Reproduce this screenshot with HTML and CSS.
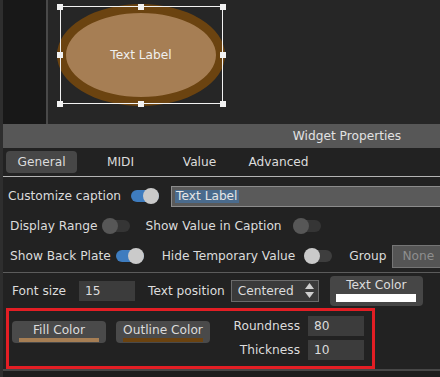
FILE: index.html
```html
<!DOCTYPE html>
<html lang="en">
<head>
    <meta charset="UTF-8">
    <title>Widget Properties</title>
    <link rel="stylesheet" href="styles.css">
</head>
<body>
    <div class="app">
        <div class="editor">
            <div class="sidebar"></div>
            <div class="stage">
                <div class="shape"><span>Text Label</span></div>
                <div class="selection">
                    <i class="handle h-tl"></i>
                    <i class="handle h-tc"></i>
                    <i class="handle h-tr"></i>
                    <i class="handle h-ml"></i>
                    <i class="handle h-mr"></i>
                    <i class="handle h-bl"></i>
                    <i class="handle h-bc"></i>
                    <i class="handle h-br"></i>
                </div>
            </div>
        </div>

        <div class="panel">
            <div class="panel-title">Widget Properties</div>
            <div class="tabs">
                <div class="tab active">General</div>
                <div class="tab">MIDI</div>
                <div class="tab">Value</div>
                <div class="tab">Advanced</div>
            </div>

            <div class="props">
                <div class="row row-caption">
                    <span>Customize caption</span>
                    <span class="toggle on t-caption"></span>
                    <div class="caption-input"><span class="selected">Text Label</span></div>
                </div>
                <div class="row">
                    <span>Display Range</span>
                    <span class="toggle t-range"></span>
                    <span class="lbl-showvalue">Show Value in Caption</span>
                    <span class="toggle t-showvalue"></span>
                </div>
                <div class="row">
                    <span>Show Back Plate</span>
                    <span class="toggle on t-plate"></span>
                    <span class="lbl-hide">Hide Temporary Value</span>
                    <span class="toggle light t-hide"></span>
                    <span class="lbl-group">Group</span>
                    <div class="group-select">None</div>
                </div>
            </div>

            <div class="row row-font">
                <span>Font size</span>
                <div class="num num-font">15</div>
                <span class="lbl-pos">Text position</span>
                <div class="select">
                    <span>Centered</span>
                    <svg class="arrows" width="9" height="15" viewBox="0 0 9 15">
                        <polygon points="4.5,0 9,6 0,6" fill="#cfcfcf"/>
                        <polygon points="0,9 9,9 4.5,15" fill="#cfcfcf"/>
                    </svg>
                </div>
                <div class="text-color-btn">
                    <div class="btn-label">Text Color</div>
                    <div class="swatch-white"></div>
                </div>
            </div>

            <div class="shape-box">
                <div class="color-btn">
                    <div class="btn-label">Fill Color</div>
                    <div class="bar fill"></div>
                </div>
                <div class="color-btn">
                    <div class="btn-label">Outline Color</div>
                    <div class="bar outline"></div>
                </div>
                <div class="metrics">
                    <label>Roundness</label>
                    <div class="num">80</div>
                    <label>Thickness</label>
                    <div class="num">10</div>
                </div>
            </div>
        </div>
    </div>
</body>
</html>
```

FILE: styles.css
```css
html, body {
    overflow: hidden;
}
body {
    margin: 0;
    background-color: #1d1d1d;
    font-family: "DejaVu Sans", "Liberation Sans", sans-serif;
    font-size: 12.2px;
    color: #dcdcdc;
}
.app {
    border-left: 3px solid #2e2e2e;
    height: 377px;
}

/* editor canvas */
.editor {
    display: flex;
    height: 124px;
}
.sidebar {
    width: 43px;
    background-color: #181818;
    border-right: 2px solid #494949;
}
.stage {
    flex: 1;
    position: relative;
    background-color: #262626;
}
.shape {
    position: absolute;
    left: 9px;
    top: 4px;
    width: 168px;
    height: 102px;
    box-sizing: border-box;
    border: 9px solid #6b4310;
    border-radius: 50%;
    background-color: #a67e54;
    display: flex;
    align-items: center;
    justify-content: center;
    color: #f0f0f0;
}
.selection {
    position: absolute;
    left: 12px;
    top: 6px;
    width: 163px;
    height: 98px;
    box-sizing: border-box;
    border: 1px solid #f2f2f2;
}
.handle {
    position: absolute;
    width: 6px;
    height: 6px;
    background-color: #f2f2f2;
}
.h-tl { left: -4px; top: -3px; }
.h-tc { left: 77px; top: -3px; }
.h-tr { right: -4px; top: -3px; }
.h-ml { left: -4px; top: 45px; }
.h-mr { right: -4px; top: 45px; }
.h-bl { left: -4px; bottom: -4px; }
.h-bc { left: 77px; bottom: -4px; }
.h-br { right: -4px; bottom: -4px; }

/* properties panel */
.panel {
    width: 688px;
    background-color: #222;
    border-bottom: 2px solid #474747;
}
.panel-title {
    height: 24px;
    line-height: 24px;
    background-color: #575757;
    text-align: center;
    color: #e2e2e2;
}
.tabs {
    display: flex;
    padding: 3px 0 3px 3px;
    border-bottom: 1px solid #b4b4b4;
}
.tab {
    width: 71px;
    height: 22px;
    line-height: 22px;
    text-align: center;
    margin-right: 8px;
    border-radius: 4px;
}
.tab.active {
    background-color: #474747;
}

.props {
    padding: 4px 0 1px;
    border-bottom: 1px solid #5c5c5c;
}
.row {
    display: flex;
    align-items: center;
    height: 30px;
    padding-left: 7px;
    white-space: nowrap;
}
.row-caption {
    padding-left: 5px;
}

.toggle {
    position: relative;
    flex: none;
    width: 28px;
    height: 16px;
}
.toggle::before {
    content: "";
    position: absolute;
    left: 0;
    right: 0;
    top: 2px;
    height: 12px;
    border-radius: 6px;
    background-color: #353535;
}
.toggle::after {
    content: "";
    position: absolute;
    left: 0;
    top: 0;
    width: 16px;
    height: 16px;
    border-radius: 50%;
    background-color: #575757;
}
.toggle.on::before {
    background-color: #3e7cbf;
}
.toggle.on::after {
    left: auto;
    right: 0;
    background-color: #cacaca;
}
.toggle.light::before {
    background-color: #3e3e3e;
}
.toggle.light::after {
    background-color: #cacaca;
}

.t-caption { margin-left: 10px; }
.t-range { margin-left: 5px; }
.lbl-showvalue { margin-left: 15px; }
.t-showvalue { margin-left: 11px; }
.t-plate { margin-left: 5px; }
.lbl-hide { margin-left: 18px; }
.t-hide { margin-left: 9px; }
.lbl-group { margin-left: 17px; }

.caption-input {
    margin-left: 12px;
    width: 320px;
    height: 21px;
    box-sizing: border-box;
    border: 1px solid #8c8c8c;
    background-color: #5a5a5a;
    padding-left: 3px;
    display: flex;
    align-items: center;
}
.selected {
    background-color: #4a6b8d;
    color: #e6e6e6;
    line-height: 13px;
    padding: 0 1px;
}
.group-select {
    margin-left: 6px;
    width: 60px;
    height: 23px;
    box-sizing: border-box;
    background-color: #555;
    border: 1px solid #757575;
    color: #8e8e8e;
    padding-left: 9px;
    line-height: 21px;
}

.row-font {
    height: 35px;
    padding-left: 9px;
}
.num {
    width: 56px;
    height: 20px;
    line-height: 20px;
    box-sizing: border-box;
    background-color: #3c3c3c;
    padding-left: 6px;
}
.num-font { margin-left: 13px; }
.lbl-pos { margin-left: 13px; }
.select {
    margin-left: 6px;
    width: 88px;
    height: 22px;
    box-sizing: border-box;
    border: 1px solid #6b6b6b;
    background-color: #3a3a3a;
    padding-left: 6px;
    display: flex;
    align-items: center;
}
.arrows {
    margin-left: auto;
    margin-right: 4px;
}
.text-color-btn {
    margin-left: 11px;
    width: 93px;
    height: 30px;
    box-sizing: border-box;
    background-color: #464646;
    border-radius: 4px;
    padding-top: 2px;
    text-align: center;
}
.btn-label {
    line-height: 14px;
}
.swatch-white {
    width: 80px;
    height: 8px;
    margin: 2px auto 0;
    background-color: #fff;
}

/* highlighted shape group */
.shape-box {
    margin-left: 3px;
    width: 369px;
    height: 61px;
    box-sizing: border-box;
    border: 3px solid #e31e24;
    display: flex;
    align-items: flex-start;
    padding: 0 8px 0 3px;
}
.color-btn {
    margin-top: 10px;
    margin-right: 10px;
    width: 94px;
    height: 22px;
    box-sizing: border-box;
    background-color: #4a4a4a;
    border-radius: 4px;
    padding-top: 2px;
    text-align: center;
}
.bar {
    width: 80px;
    height: 4px;
    margin: 1px auto 0;
}
.bar.fill { background-color: #a67e54; }
.bar.outline { background-color: #6b4310; }
.metrics {
    margin-left: auto;
    margin-top: 5px;
    display: grid;
    grid-template-columns: auto 56px;
    column-gap: 8px;
    row-gap: 4px;
    align-items: center;
}
.metrics label {
    text-align: right;
}
```
